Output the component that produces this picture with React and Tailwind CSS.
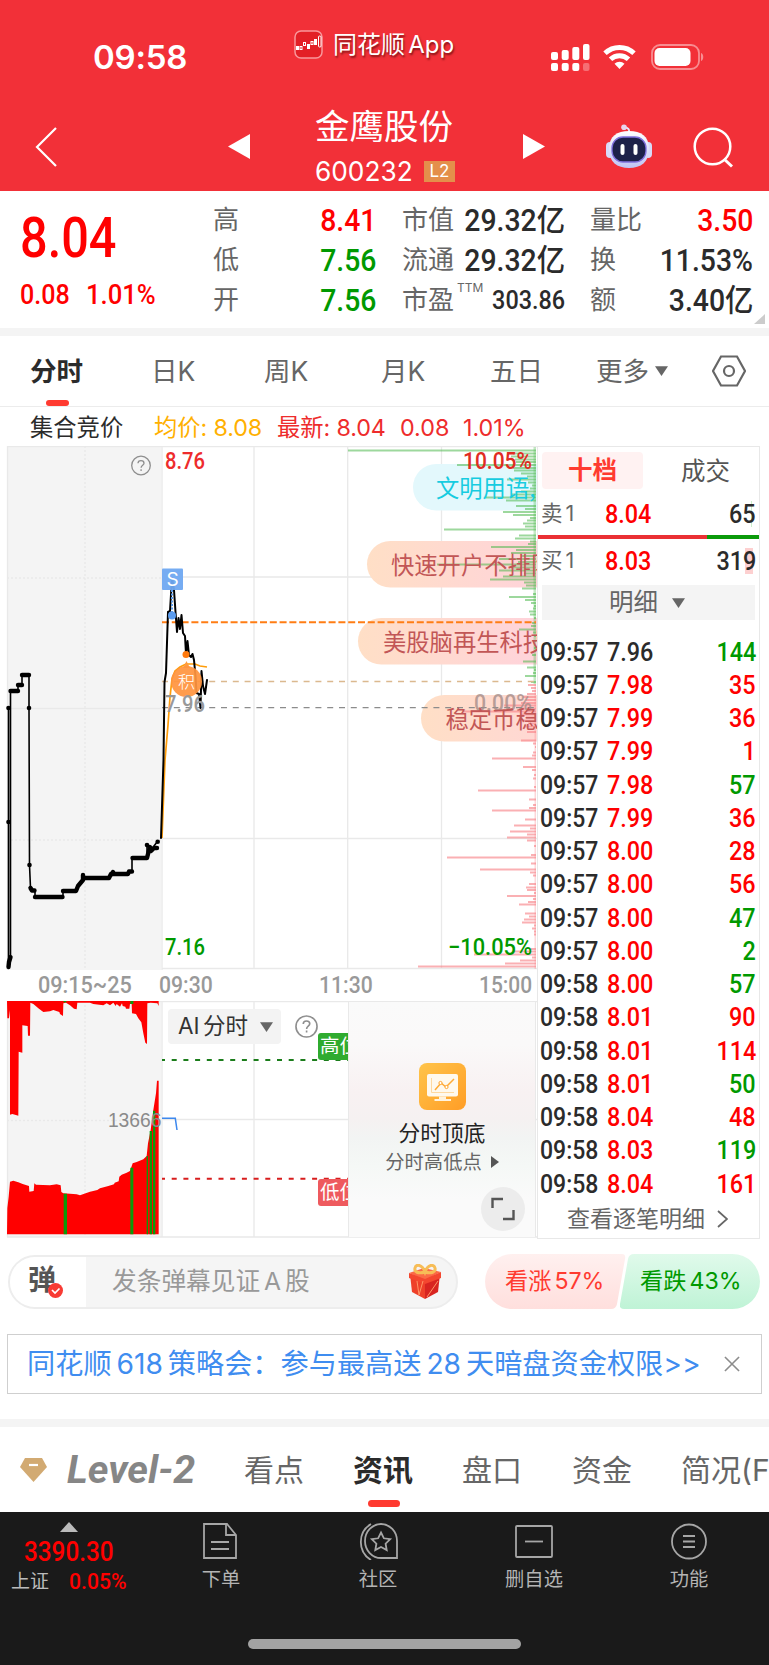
// App.jsx — intraday stock quote screen
import React from 'react';
import { clsx } from 'clsx';

// ─── Data ────────────────────────────────────────────────────
const TRADES = [
  ['09:57', '7.96', '144', 'k', 'g'], ['09:57', '7.98', '35', 'r', 'r'], ['09:57', '7.99', '36', 'r', 'r'],
  ['09:57', '7.99', '1', 'r', 'r'], ['09:57', '7.98', '57', 'r', 'g'], ['09:57', '7.99', '36', 'r', 'r'],
  ['09:57', '8.00', '28', 'r', 'r'], ['09:57', '8.00', '56', 'r', 'r'], ['09:57', '8.00', '47', 'r', 'g'],
  ['09:57', '8.00', '2', 'r', 'g'], ['09:58', '8.00', '57', 'r', 'g'], ['09:58', '8.01', '90', 'r', 'r'],
  ['09:58', '8.01', '114', 'r', 'r'], ['09:58', '8.01', '50', 'r', 'g'], ['09:58', '8.04', '48', 'r', 'r'],
  ['09:58', '8.03', '119', 'r', 'g'], ['09:58', '8.04', '161', 'r', 'r'],
];

const TONE = { k: 'text-[#2b2b2b]', r: 'text-[#ff0000]', g: 'text-[#009900]' };

// price distribution, [y, length]
const GREEN_BARS = [
  [450.5, 188], [453.5, 23], [456.5, 25], [459.5, 21], [462, 20], [465, 79], [468, 23], [470.5, 22], [473.5, 15],
  [476.5, 9], [479.5, 29], [482.5, 8], [485.5, 4], [488.5, 6], [491.5, 15], [494.5, 24], [497.5, 50], [500.5, 30],
  [506, 20], [509, 11], [512, 33], [515, 23], [518, 6], [520.5, 9], [523.5, 13], [526.5, 11], [529.5, 92],
  [535.5, 17], [538.5, 21], [541.5, 6], [544, 8], [547, 45], [550, 20], [553, 25], [556, 15], [559, 37], [562, 18],
  [564.5, 99], [567.5, 25], [570.5, 37], [573.5, 12], [576.5, 33], [579.5, 46], [582.5, 12], [585.5, 10],
  [588.5, 14], [594, 3], [597, 27], [600, 11], [603, 5], [606, 2], [608.5, 3], [611.5, 7], [614.5, 6], [618, 2],
  [623, 4], [626, 5], [629.5, 17], [632.5, 3], [636, 2], [641, 3], [648, 2], [655, 4], [661.5, 13], [667.5, 9],
  [670, 2], [673, 3], [676, 11], [682, 5],
];
const RED_BARS = [
  [685, 8], [688, 5], [691, 4], [694, 9], [697, 13], [700, 10], [703, 15], [705.5, 32], [708.5, 17], [711.5, 73],
  [714.5, 16], [717.5, 10], [720.5, 14], [723.5, 8], [726.5, 12], [732, 9], [740.5, 15], [743.5, 3], [747, 1],
  [752.5, 3], [755.5, 4], [758.5, 44], [767, 13], [770, 4], [775, 2], [778.5, 3], [787, 2], [790.5, 58],
  [799.5, 7], [805, 3], [808, 7], [810.5, 44], [819.5, 11], [825.5, 22], [828.5, 6], [831.5, 26], [834.5, 9],
  [837.5, 29], [840.5, 9], [846, 2], [855, 5], [857.5, 89], [863.5, 5], [869.5, 56], [872.5, 6], [875.5, 3],
  [884, 7], [887.5, 10], [890, 9], [893, 2], [896, 29], [899, 3], [902, 8], [904.5, 17], [913.5, 11], [916.5, 7],
  [919.5, 12], [922.5, 14], [925.5, 2], [928.5, 4], [931.5, 2], [934.5, 2], [949, 5], [951.5, 22], [954.5, 62],
  [957.5, 4], [960.5, 16], [963.5, 31], [966.5, 118],
];

// ─── Small pieces ────────────────────────────────────────────
const Num = ({ children, className, right }) => (
  <span className={clsx(
    "inline-block whitespace-nowrap font-['Roboto','Noto_Sans_CJK_SC',sans-serif] font-medium",
    right ? 'origin-right' : 'origin-left', className?.includes('scale-x-') || 'scale-x-90', className,
  )}>
    {children}
  </span>
);

const Caret = ({ className }) => (
  <svg className={className} width="13" height="12" viewBox="0 0 14 12">
    <path d="M0 1h14L7 11.5z" fill="currentColor" />
  </svg>
);

const Help = ({ size }) => (
  <svg width={size} height={size} viewBox="0 0 24 24" fill="none" stroke="#8e8e8e" strokeWidth="1.7">
    <circle cx="12" cy="12" r="11" />
    <path d="M8.6 9.4c0-2 1.5-3.2 3.4-3.2s3.4 1.2 3.4 3c0 2.4-3.3 2.7-3.3 5.3M12.1 16.3v2" />
  </svg>
);

// ─── Header ──────────────────────────────────────────────────
const Header = () => (
  <header className="h-[191px] bg-[#f23038] text-white">
    <div className="flex h-[102px] items-start">
      <span className="ml-[93px] mt-[41px] w-[201px] text-[33px] leading-[33px] font-semibold tracking-[-0.2px]">09:58</span>
      <svg className="mt-[30px]" width="29" height="29" viewBox="0 0 29 29">
        <rect x="1" y="1" width="27" height="27" rx="6" fill="#e31f26" stroke="#f9979b" strokeWidth="1.5" />
        <g fill="#fff">
          <rect x="2" y="16" width="3" height="4" /><rect x="13" y="14" width="3" height="5" /><rect x="20" y="9" width="3" height="6" />
        </g>
        <g fill="none" stroke="#fff">
          <rect x="6" y="16.5" width="2" height="3" /><rect x="9.5" y="12.5" width="2" height="3" />
          <rect x="17" y="11.5" width="2" height="3" /><rect x="24.5" y="6" width="2.5" height="11" rx="1" />
        </g>
      </svg>
      <span className="ml-[10px] mt-[32px] w-[218px] whitespace-nowrap text-[24px] leading-[26px] [word-spacing:-3.5px] [text-shadow:1px_2px_2px_rgba(60,0,0,.6)]">同花顺 App</span>
      <svg className="mt-[43px]" width="39" height="28" viewBox="0 0 39 28" fill="#fff">
        <rect x="0" y="9" width="7" height="8" rx="2" /><rect x="10.7" y="7" width="7" height="10" rx="2" />
        <rect x="21.3" y="4" width="7" height="13" rx="2" /><rect x="32" y="1" width="6.5" height="16" rx="2" />
        <rect x="0" y="20" width="7" height="8" rx="2" /><rect x="10.7" y="20" width="7" height="8" rx="2" />
        <rect x="21.3" y="20" width="7" height="8" rx="2" /><rect x="32" y="20" width="6.5" height="8" rx="2" opacity=".3" />
      </svg>
      <svg className="ml-[13px] mt-[44px]" width="33" height="26" viewBox="0 0 33 26" fill="none" stroke="#fff" strokeWidth="4.9">
        <path d="M2 9.3a21 21 0 0 1 29 0" /><path d="M7.5 15.3a13 13 0 0 1 18 0" />
        <path d="M16.5 25l-5-5.3a7.3 7.3 0 0 1 10 0z" fill="#fff" stroke="none" />
      </svg>
      <svg className="ml-[15px] mt-[44px]" width="53" height="26" viewBox="0 0 53 26">
        <rect x="1" y="1" width="47" height="24" rx="8" fill="none" stroke="#fff" strokeOpacity=".45" strokeWidth="1.8" />
        <rect x="3.5" y="4" width="36" height="18" rx="5" fill="#fff" />
        <path d="M50 9c3 1 3 7 0 8z" fill="#fff" opacity=".45" />
      </svg>
    </div>
    <div className="flex h-[89px] items-start">
      <svg className="ml-[35px] mt-[25px]" width="23" height="40" viewBox="0 0 23 40" fill="none" stroke="#fff" strokeWidth="2.2">
        <path d="M21 1L2 20l19 19" />
      </svg>
      <svg className="ml-[170px] mt-[32px]" width="22" height="26" viewBox="0 0 22 26"><path d="M22 0v25L0 12.500z" fill="#fff" /></svg>
      <div className="ml-[65px] mt-[7px] w-[208px]">
        <div className="text-[34.5px] leading-[36px]">金鹰股份</div>
        <div className="mt-[11px] flex items-center">
          <span className="w-[109px] text-[27.5px] leading-[31px]"><span className="inline-block origin-left scale-x-[.955]">600232</span></span>
          <span className="flex h-[21px] w-[31px] items-center justify-center bg-[#e48f4b] text-[17px] leading-none">L2</span>
        </div>
      </div>
      <svg className="mt-[32px]" width="22" height="26" viewBox="0 0 22 26"><path d="M0 0v25l22-12.500z" fill="#fff" /></svg>
      <svg className="ml-[60px] mt-[22px]" width="48" height="45" viewBox="0 0 48 45">
        <defs>
          <linearGradient id="helmet" x1="0" y1="0" x2="0" y2="1">
            <stop offset="0" stopColor="#fff" /><stop offset="1" stopColor="#bfc4f4" />
          </linearGradient>
        </defs>
        <path d="M24 9c1-4-1-5-5-6" fill="none" stroke="#e8e8fb" strokeWidth="2" />
        <circle cx="19" cy="3.3" r="2.8" fill="#e8d5ee" />
        <rect x="1" y="18" width="8" height="16" rx="4" fill="#d8daf8" /><rect x="39" y="18" width="8" height="16" rx="4" fill="#d8daf8" />
        <path d="M4 25C4 12 12 7 24 7s20 5 20 18-8 19-20 19S4 38 4 25z" fill="url(#helmet)" />
        <rect x="7" y="13" width="34" height="25" rx="11" fill="#1d2149" stroke="#7f70dd" strokeWidth="1.3" />
        <rect x="15.5" y="20" width="4" height="11" rx="2" fill="#fff" /><rect x="28.5" y="20" width="4" height="11" rx="2" fill="#fff" />
      </svg>
      <svg className="ml-[40px] mt-[25px]" width="42" height="42" viewBox="0 0 42 42" fill="none" stroke="#fff" strokeWidth="2.5">
        <circle cx="19.5" cy="19.5" r="17.8" /><path d="M31 32l8 7.5" strokeWidth="3" />
      </svg>
    </div>
  </header>
);

// ─── Quote summary ───────────────────────────────────────────
const Stat = ({ label, value, tone = 'k', sup }) => (
  <div className="flex h-[40px] items-center justify-between">
    <span className="flex items-start whitespace-nowrap text-[26px] leading-[28px] text-[#666]">
      {label}{sup && <sup className="top-0 ml-[3px] -mt-[4px] text-[12px] leading-[12px]">{sup}</sup>}
    </span>
    <Num right className={clsx(TONE[tone], 'leading-none', sup ? 'text-[26px] -ml-5 scale-x-90' : 'text-[31px] scale-x-[.915]')}>{value}</Num>
  </div>
);

const Quote = () => (
  <section className="relative flex h-[145px] border-b-8 border-[#f4f4f4] pt-[9px]">
    <div className="w-[213px] pl-[20px] text-[#ff0000]">
      <div className="mt-[9px] h-[56px] text-[55px] leading-[56px]"><Num className="scale-x-[.885]">8.04</Num></div>
      <div className="mt-[15px] flex text-[28.5px] leading-[30px]">
        <Num className="w-[66px] scale-x-[.88]">0.08</Num><Num className="scale-x-[.9]">1.01%</Num>
      </div>
    </div>
    <div className="w-[163px]">
      <Stat label="高" value="8.41" tone="r" /><Stat label="低" value="7.56" tone="g" /><Stat label="开" value="7.56" tone="g" />
    </div>
    <div className="ml-[26px] w-[163px]">
      <Stat label="市值" value="29.32亿" /><Stat label="流通" value="29.32亿" /><Stat label="市盈" value="303.86" sup="TTM" />
    </div>
    <div className="ml-[25px] w-[163px]">
      <Stat label="量比" value="3.50" tone="r" /><Stat label="换" value="11.53%" /><Stat label="额" value="3.40亿" />
    </div>
    <svg className="absolute bottom-[4px] right-[4px]" width="11" height="10"><path d="M11 0v10H0z" fill="#ccc" /></svg>
  </section>
);

// ─── Period tabs ─────────────────────────────────────────────
const PeriodTabs = () => (
  <nav className="flex h-[71px] items-center border-b border-[#ececec] text-[26.5px] leading-none text-[#666]">
    <div className="relative ml-[30px] w-[121px] font-bold text-[#2b2b2b]">
      分时
      <span className="absolute left-[16px] top-[42px] h-[6px] w-[23px] rounded-[3px] bg-[#ff3a30]" />
    </div>
    <span className="w-[113px]">日K</span>
    <span className="w-[117px]">周K</span>
    <span className="w-[109px]">月K</span>
    <span className="w-[106px]">五日</span>
    <span className="flex w-[116px] items-center">更多<Caret className="ml-[6px] -mt-px" /></span>
    <svg width="34" height="32" viewBox="0 0 34 32" fill="none" stroke="#666" strokeWidth="2.2">
      <path d="M9 1.500h16L33 16l-8 14.500H9L1 16z" /><circle cx="17" cy="16" r="5" />
    </svg>
  </nav>
);

const InfoRow = () => (
  <div className="flex h-[39px] items-center pt-[3px] text-[23.3px] leading-none text-[#ee2c2c] whitespace-nowrap">
    <span className="ml-[30px] w-[124px] text-[#2b2b2b]">集合竞价</span>
    <span className="w-[123px] text-[#ffb000] tracking-[-0.1px]">均价: 8.08</span>
    <span className="w-[123px] tracking-[-0.1px]">最新: 8.04</span>
    <span className="w-[63px]">0.08</span>
    <span>1.01%</span>
  </div>
);

// ─── Price chart ─────────────────────────────────────────────
const AUCTION_THIN = 'M8.5 967V708M10.5 957V691H18V685H22V675H29V708L29.5 865 30.5 888 35 891V897H63V891H76L79 885 83 879V878H109L110 874H128L130 871H132V858H147V845L151 850 157 842';
const AUCTION_THICK = ['M10.5 691H18', 'M18 685H22', 'M22 675H29', 'M30.5 888L32 890.5H34.5', 'M35 897H62.5', 'M63 891H76L78 886 83 880V875', 'M84 878H109L111 874H128L129 871.5H132', 'M112 874L113 872', 'M132.5 858H147L148 854 150 847 151 851 154 848H157', 'M8.5 967L9 962 10.5 957'];
const PRICE = 'M161 838L163.5 760 164.5 682 166 673 168 612 170 611 172 578 174 590 175.5 612 177 632 178.5 618 180 629 181.500 615 183 633 185 636 186 654 187.5 641 189 655 191 657 192.5 654 194 660 195.5 676 196.5 693 199 694 200.5 708 201.5 671 203 686 205 694 207 680';
const AVG = 'M162 838L165 760 168 725 170 697 172 679 175 671 180 667 186 664H195L200 666 207 667';

const BULLETS = [
  { x: 413, y: 464, tx: 436, text: '文明用语,', fill: '#e3f8fc', color: '#17cce0' },
  { x: 367, y: 541, tx: 391, text: '快速开户不排队', fill: 'url(#peach)', color: '#c25656' },
  { x: 358, y: 618, tx: 383, text: '美股脑再生科技', fill: 'url(#peach)', color: '#c25656' },
  { x: 421, y: 695, tx: 445.5, text: '稳定币稳', fill: 'url(#peach)', color: '#c25656' },
];

const PriceChart = () => (
  <svg width="537" height="524" viewBox="0 446 537 524">
    <defs>
      <linearGradient id="peach" x1="0" x2="1">
        <stop offset="0" stopColor="#ffdfc6" /><stop offset=".9" stopColor="#ffd3db" />
      </linearGradient>
    </defs>
    <rect x="7" y="446" width="154" height="524" fill="#f4f4f4" />
    <g stroke="#e9e9e9" strokeWidth="1.3" fill="none">
      <path d="M7 446.500H537M7.500 446V970M162 446V970M254 446V969M347.700 446V969M441.500 446V969M162 577H537M162 838.500H537M162 968.500H537M7 708.500H161" />
      <path d="M85 446V970M7 578H161M7 840H161" strokeDasharray="2 2" />
    </g>
    {BULLETS.map(b => <rect key={b.y} x={b.x} y={b.y} width="200" height="46.5" rx="23.25" fill={b.fill} />)}
    <g fill="#4db84d" fillOpacity=".55">
      {GREEN_BARS.map(([y, w]) => <rect key={y} x={536 - w} y={y - 1} width={w} height="2" />)}
      <rect x="533.5" y="447" width="2.5" height="237" opacity=".6" />
    </g>
    <g fill="#f8858b" fillOpacity=".65">
      {RED_BARS.map(([y, w]) => <rect key={y} x={536 - w} y={y - 1} width={w} height="2" />)}
      <rect x="534.5" y="684" width="1.5" height="285" opacity=".5" />
    </g>
    <path d="M162 622.200H536" stroke="#ff7d14" strokeWidth="2" strokeDasharray="7 2.800" />
    <path d="M162 681.500H536" stroke="#dbb98f" strokeWidth="1.3" strokeDasharray="6 5.800" />
    <path d="M162 707.700H536" stroke="#8c8c8c" strokeWidth="1.3" strokeDasharray="6 5.800" />

    <path d={AVG} fill="none" stroke="#ff9d0a" strokeWidth="1.7" />
    <g fill="none" stroke="#000" strokeLinejoin="round" strokeLinecap="round">
      <path d={AUCTION_THIN} strokeWidth="1.6" />
      {AUCTION_THICK.map(d => <path key={d} d={d} strokeWidth="4.4" />)}
      <path d={PRICE} strokeWidth="2" />
    </g>
    {[[8.5, 708], [29, 708], [8.5, 822], [29.5, 865], [157.7, 841.7], [147, 845]].map(([x, y]) => (
      <circle key={`${x}-${y}`} cx={x} cy={y} r="2.3" />
    ))}

    <circle cx="186" cy="654.5" r="3.5" fill="#ff7a0e" />
    <path d="M183 668l3.500-7 3.500 7z" fill="#ff9a40" />
    <circle cx="186.5" cy="681.5" r="15.5" fill="#ff9440" fillOpacity=".93" />
    <text x="178" y="688" fill="#fff" className="font-['Noto_Sans_CJK_SC'] text-[17px] font-light">积</text>
    <path d="M172 590V612" stroke="#5a9ae8" strokeWidth="2" strokeDasharray="2 1.500" />
    <circle cx="172" cy="615.5" r="4" fill="#5a9bee" />
    <rect x="162" y="568.5" width="21" height="21.5" rx="1" fill="#6fa8f1" fillOpacity=".95" />
    <text x="172.5" y="586" textAnchor="middle" fill="#fff" className="font-['Inter'] text-[19px]">S</text>

    {/* axis labels */}
    <g className="font-['Roboto'] font-medium text-[23.5px]">
      <text x="165" y="469" fill="#ee2c2c" textLength="40" lengthAdjust="spacingAndGlyphs">8.76</text>
      <text x="165" y="955" fill="#009900" textLength="40" lengthAdjust="spacingAndGlyphs">7.16</text>
      <text x="165" y="711.5" fill="#999" textLength="40" lengthAdjust="spacingAndGlyphs">7.96</text>
      <text x="463" y="469" fill="#e02c22" textLength="69" lengthAdjust="spacingAndGlyphs">10.05%</text>
      <text x="448" y="955" fill="#009900" textLength="84" lengthAdjust="spacingAndGlyphs">−10.05%</text>
      <text x="474" y="711" fill="#a58c88" fillOpacity=".8" textLength="58" lengthAdjust="spacingAndGlyphs">0.00%</text>
    </g>
    <g className="font-['Noto_Sans_CJK_SC'] text-[23.3px]">
      {BULLETS.map(b => <text key={b.y} x={b.tx} y={b.y + 32.5} fill={b.color}>{b.text}</text>)}
    </g>
    <g transform="translate(131 455.500)" fill="none" stroke="#8e8e8e" strokeWidth="1.3">
      <circle cx="10" cy="10" r="9.3" />
      <path d="M7 7.800c0-1.700 1.300-2.700 3-2.700s3 1 3 2.600c0 2-2.900 2.200-2.900 4.500M10.100 13.800v1.600" />
    </g>
  </svg>
);

const TimeAxis = () => (
  <div className="flex h-[31px] items-center text-[23px] leading-none text-[#999]">
    <Num className="ml-[38px] w-[122px] scale-x-[.94]">09:15~25</Num>
    <Num className="w-[162px] scale-x-[.92]">09:30</Num>
    <Num className="w-[162px] scale-x-[.92]">11:30</Num>
    <Num className="scale-x-[.91]">15:00</Num>
  </div>
);

// ─── Volume / AI sub chart ───────────────────────────────────
const HANG = '21,32 476,32 476,48 472,40 452,38 442,40 441,162 436,158 430,130 424,97 415,85 408,72 396,70 395,42 390,42 388,56 378,56 376,50 368,48 366,40 360,50 350,42 347,48 340,38 330,46 320,40 310,46 280,42 270,38 232,38 230,58 222,56 210,46 198,38 190,40 189,78 180,72 178,66 160,60 150,64 130,66 115,55 100,42 91,38 90,137 84,137 83,108 67,106 67,188 56,185 55,377 45,374 37,372 30,374 30,60 27,85 22,85';
const RISE = '21,733 22,655 26,620 30,575 40,572 55,577 68,582 87,588 88,605 101,603 103,580 108,584 150,586 170,583 182,586 184,606 190,610 230,613 240,616 270,605 292,600 300,595 325,588 342,583 344,578 356,574 358,560 365,554 380,548 390,543 398,520 410,516 430,508 440,498 444,460 452,420 460,360 468,310 471,272 476,272 476,733';

const SubChart = () => (
  <div className="relative h-[238px]">
    <svg className="block" width="537" height="238" viewBox="0 1001 537 238">
      <rect x="7" y="1001" width="154" height="236" fill="#f4f4f4" />
      <g stroke="#e9e9e9" strokeWidth="1.3" fill="none">
        <path d="M7 1001.500H537M7.500 1001V1237M162 1001V1237M254 1001V1237M162 1119.500H537M7 1237H537" />
        <path d="M85 1001V1237M7 1120.500H161" strokeDasharray="2 2" />
      </g>
      <g transform="translate(0 990) scale(.33333)">
        <polygon points={HANG} fill="#ff0000" /><polygon points={RISE} fill="#ff0000" />
        <g fill="#0a9a0a">
          <path d="M191 611h10v122h-10zM391 533h9v200h-9zM191 32h8v5h-8zM391 32h9v10h-9z" />
          <path d="M440 498h4v235h-4zM449 423h7v310h-7zM459 362h7v371h-7z" />
        </g>
      </g>
      <text x="161.5" y="1127" textAnchor="end" fill="#8a8a8a" className="font-['Liberation_Sans'] text-[19.3px]">13666</text>
      <path d="M162 1118.300H175.300L177 1130" fill="none" stroke="#3d88ee" strokeWidth="1.5" />
      <path d="M162 1060H349" stroke="#1b7d1b" strokeWidth="2" strokeDasharray="5 6.700" strokeDashoffset="2" />
      <path d="M162 1178.700H349" stroke="#d81d1d" strokeWidth="2" strokeDasharray="5 6.700" strokeDashoffset="2" />
    </svg>
    <div className="absolute left-[168px] top-[8px] flex h-[35px] w-[113px] items-center rounded bg-[#f3f3f3] pl-[10px] text-[22.5px] leading-none text-[#333]">
      <span className="whitespace-nowrap [word-spacing:-3px]">AI 分时</span><Caret className="absolute right-[8px] text-[#666]" />
    </div>
    <div className="absolute left-[295px] top-[14px]"><Help size={23} /></div>
    <div className="absolute left-[318px] top-[32px] h-[27px] w-[31px] overflow-hidden whitespace-nowrap rounded-l-[3px] bg-[#2fab2f] pl-[2px] text-[19.5px] leading-[27px] text-white">高位</div>
    <div className="absolute left-[318px] top-[178px] h-[27px] w-[31px] overflow-hidden whitespace-nowrap rounded-l-[3px] bg-[#ee5a5e] pl-[2px] text-[19.5px] leading-[27px] text-white">低位</div>
    <div className="absolute left-[348px] top-px flex h-[235px] w-[188px] flex-col items-center border-x border-[#e9e9e9] bg-[linear-gradient(180deg,#fafafa_0%,#faf9f9_18%,#f8f1f2_38%,#f5f1f1_50%,#f2f4f3_58%,#f5f8f6_70%,#fafafa_84%)] pt-[61px]">
      <svg width="47" height="47" viewBox="0 0 47 47">
        <defs>
          <linearGradient id="gold" x1="0" y1="0" x2="1" y2="1">
            <stop offset="0" stopColor="#ffc44a" /><stop offset="1" stopColor="#ff9d26" />
          </linearGradient>
        </defs>
        <rect width="47" height="47" rx="8" fill="url(#gold)" />
        <rect x="8" y="11" width="31" height="22.5" rx="2" fill="#fff9ee" />
        <path d="M20 33.500h7v2.500h5v2H15.500v-2H20z" fill="#fff3df" />
        <path d="M12.500 15v14.500H35" fill="none" stroke="#ffd9a0" strokeWidth="1" />
        <path d="M16 27l6-7 5 4 8-8" fill="none" stroke="#ffab36" strokeWidth="1.5" />
        <circle cx="21.5" cy="20" r="1.6" fill="#fff" stroke="#ffa52e" /><circle cx="27.5" cy="24" r="1.6" fill="#fff" stroke="#ffa52e" />
      </svg>
      <div className="mt-[11px] text-[21.7px] leading-[24px] text-[#222]">分时顶底</div>
      <div className="mt-[7px] flex items-center text-[19.3px] leading-[20px] text-[#666]">
        分时高低点
        <svg className="ml-[9px]" width="8" height="12"><path d="M0 0v12l8-6z" fill="#555" /></svg>
      </div>
      <div className="absolute bottom-[6px] right-[10px] flex size-[44px] items-center justify-center rounded-full bg-[#ececec]">
        <svg width="24" height="24" viewBox="0 0 24 24" fill="none" stroke="#555" strokeWidth="2.4">
          <path d="M1.500 11V2H12M22.500 13v9H12" />
        </svg>
      </div>
    </div>
  </div>
);

// ─── Order book ──────────────────────────────────────────────
const BookRow = ({ label, price, qty, mark, className }) => (
  <div className={clsx('flex h-[46px] items-center leading-none', className)}>
    <span className="w-[67px] pl-[3px] text-[21.5px] text-[#666] [word-spacing:-3px]">{label} 1</span>
    <Num className="w-[60px] text-[26px] text-[#ff0000]">{price}</Num>
    <span className={clsx('ml-auto mr-[3px] text-[26px] text-[#2b2b2b]', mark)}><Num right>{qty}</Num></span>
  </div>
);

const OrderBook = () => (
  <aside className="flex h-[793px] w-[223px] flex-col border border-[#e8e8e8]">
    <div className="mt-[5px] flex h-[37px] items-center text-[24.5px] leading-none">
      <span className="ml-[4px] flex h-[37px] w-[101px] items-center justify-center rounded bg-[#fff2f2] font-bold text-[#ff3b30]">十档</span>
      <span className="ml-[38px] mt-px text-[#555]">成交</span>
    </div>
    <BookRow className="pt-[3px]" label="卖" price="8.04" qty="65" mark="bg-[linear-gradient(#c9efc9,#c9efc9)] bg-[length:1px_100%] bg-[position:right_4px_top] bg-no-repeat" />
    <div className="flex h-[4px]"><span className="flex-1 bg-[#ea3034]" /><span className="w-[52px] bg-[#0a9a0a]" /></div>
    <BookRow className="pb-[2px]" label="买" price="8.03" qty="319" mark="bg-[linear-gradient(#fdd0d0,#fdd0d0)] bg-[length:8px_100%] bg-[position:right_3px_top] bg-no-repeat" />
    <div className="mx-[4px] flex h-[35px] items-center bg-[#f4f4f4] pl-[67px] text-[24.5px] leading-none text-[#666]">
      明细<Caret className="ml-[14px]" />
    </div>
    <div className="mt-[15px]">
      {TRADES.map(([time, price, qty, pc, qc], i) => (
        <div key={i} className="flex h-[33.25px] items-center text-[26px] leading-none">
          <Num className="ml-[2px] w-[67px] text-[#2b2b2b] scale-x-[.885]">{time}</Num>
          <Num className={TONE[pc]}>{price}</Num>
          <Num right className={clsx('ml-auto mr-[3px]', TONE[qc])}>{qty}</Num>
        </div>
      ))}
    </div>
    <div className="mt-[6px] flex items-center whitespace-nowrap pl-[29px] text-[23px] leading-[26px] text-[#666]">
      查看逐笔明细
      <svg className="ml-[12px]" width="11" height="18" viewBox="0 0 11 18" fill="none" stroke="#666" strokeWidth="1.7"><path d="M1 1l9 8-9 8" /></svg>
    </div>
  </aside>
);

// ─── Bullet comment bar ──────────────────────────────────────
const CommentBar = () => (
  <div className="mt-[15px] flex h-[55px] items-center">
    <div className="ml-[8px] flex h-[54px] w-[450px] items-center overflow-hidden rounded-full border-2 border-[#ededed] bg-[#f5f5f5]">
      <div className="relative flex h-full w-[76px] items-center bg-white pb-[3px] pl-[18px] text-[28px] leading-none font-bold text-[#555]">
        弹
        <svg className="absolute left-[38px] top-[26px]" width="15" height="15" viewBox="0 0 15 15">
          <circle cx="7.5" cy="7.5" r="7.5" fill="#f83b34" /><path d="M4 7l3 3 4.500-4.500" fill="none" stroke="#fff" strokeWidth="1.7" />
        </svg>
      </div>
      <span className="ml-[26px] w-[296px] whitespace-nowrap text-[24.7px] leading-none text-[#999] [word-spacing:-3px]">发条弹幕见证 A 股</span>
      <svg width="34" height="36" viewBox="0 0 34 36">
        <path d="M2 10l15 4v21L4 28z" fill="#ee4029" /><path d="M32 10l-15 4v21l13-7z" fill="#d82420" />
        <path d="M1 9l15-5 17 4-16 8z" fill="#fb6a46" /><path d="M1 9l16 6v5L1 14zM33 8l-16 7v5l16-6z" fill="#f4472f" />
        <path d="M17 8C10 10 6 8 7 4s7-4 10 4c3-8 9-8 10-4s-4 6-10 4z" fill="none" stroke="#f7bd57" strokeWidth="3" />
        <path d="M9 17l2 14 4-14M30 17L19 33" fill="none" stroke="#ff9565" strokeWidth="1" />
      </svg>
    </div>
    <div className="ml-[27px] flex h-[55px] w-[141px] items-center whitespace-nowrap bg-linear-to-b from-[#fff0ef] to-[#ffdfdd] pl-[20px] text-[23.2px] leading-none text-[#ff3b30] [word-spacing:-3.5px] [clip-path:path('M27.5_0H137Q141_0_140_5L132_50Q131_55_126_55H27.5A27.5_27.5_0_0_1_27.5_0Z')]">看涨 57%</div>
    <div className="-ml-[6px] flex h-[55px] w-[140px] items-center whitespace-nowrap bg-linear-to-b from-[#e0faeb] to-[#bff3d6] pl-[20px] text-[23.2px] leading-none text-[#009900] [word-spacing:-3.5px] [clip-path:path('M112.5_0H14Q9_0_8_5L0_50Q-1_55_4_55H112.5A27.5_27.5_0_0_0_112.5_0Z')]">看跌 43%</div>
  </div>
);

const Banner = () => (
  <div className="mx-[7px] mt-[25px] flex h-[60px] items-center border border-[#cfcfcf] pl-[19px] whitespace-nowrap">
    <span className="w-[697px] text-[28.2px] leading-none text-[#3f8df0] [word-spacing:-3px]">同花顺 618 策略会：参与最高送 28 天暗盘资金权限&gt;&gt;</span>
    <svg width="16" height="16" viewBox="0 0 17 17" stroke="#8c8c8c" strokeWidth="1.7"><path d="M1 1l15 15M16 1L1 16" /></svg>
  </div>
);

// ─── Section tabs ────────────────────────────────────────────
const SectionTabs = () => (
  <nav className="mt-[25px] flex h-[93px] items-center overflow-hidden border-t-8 border-[#f4f4f4] text-[30px] leading-none whitespace-nowrap text-[#666]">
    <svg className="ml-[20px] shrink-0" width="27" height="24" viewBox="0 0 27 24">
      <path d="M5 0h17l5 9-13.500 15L0 9z" fill="#d2aa72" /><path d="M9 7h9" stroke="#fff" strokeWidth="2.2" />
    </svg>
    <span className="ml-[20px] w-[177px] shrink-0 font-['Roboto'] text-[38px] font-bold italic text-[#868686]"><span className="inline-block origin-left scale-x-[1.04]">Level-2</span></span>
    <span className="w-[109px] shrink-0">看点</span>
    <span className="relative w-[109px] shrink-0 font-bold text-[#2b2b2b]">
      资讯
      <span className="absolute left-[15px] top-[45px] h-[7px] w-[32px] rounded-[4px] bg-[#ff3a30]" />
    </span>
    <span className="w-[110px] shrink-0">盘口</span>
    <span className="w-[109px] shrink-0">资金</span>
    <span className="shrink-0">简况(F10)</span>
  </nav>
);

// ─── Bottom bar ──────────────────────────────────────────────
const NavItem = ({ label, className, children }) => (
  <div className={clsx('flex flex-col items-center text-[19.3px] leading-[22px] text-[#b4b4b4]', className)}>
    <svg width="42" height="38" viewBox="0 0 42 38" fill="none" stroke="#a6a6a6" strokeWidth="1.8">{children}</svg>
    <span className="mt-[8px]">{label}</span>
  </div>
);

const BottomBar = () => (
  <footer className="h-[153px] bg-[#1a1a1a] pt-[10px]">
    <div className="flex h-[117px]">
      <div className="w-[137px]">
        <svg className="ml-[60px] block" width="18" height="10"><path d="M9 0l9 10H0z" fill="#bbb" /></svg>
        <div className="mt-[5px] pl-[24px] text-[27px] leading-[30px] text-[#ff0000]"><Num className="scale-x-[.9]">3390.30</Num></div>
        <div className="mt-[4px] flex items-center pl-[11px] text-[19px] leading-[22px] text-[#bbb]">
          <span className="w-[58px]">上证</span><Num className="text-[22.8px] text-[#ff0000] scale-x-[.93]">0.05%</Num>
        </div>
      </div>
      <NavItem label="下单" className="ml-[54px] w-[60px]">
        <path d="M4 2h23l9 11v23H4zM26 2v11h10M11 20h18M11 27h18" />
      </NavItem>
      <NavItem label="社区" className="ml-[97px] w-[60px]">
        <path d="M40 36H24A16 17 0 1 1 40 19zM14 2A21 21 0 0 0 14 38" />
        <path d="M24 10.500l2.900 5.800 6.300.9-4.600 4.500 1.100 6.300-5.700-3-5.700 3 1.100-6.300-4.600-4.500 6.300-.9z" />
      </NavItem>
      <NavItem label="删自选" className="ml-[96px] w-[60px]">
        <rect x="3" y="4" width="36" height="31" rx="1" /><path d="M12 19.500h18" />
      </NavItem>
      <NavItem label="功能" className="ml-[95px] w-[60px]">
        <circle cx="21" cy="19.5" r="17" /><path d="M15 14h12M15 19.500h12M15 25h12" />
      </NavItem>
    </div>
    <div className="mx-auto h-[10px] w-[273px] rounded-full bg-[#a3a3a3]" />
  </footer>
);

export default function App() {
  return (
    <div className="h-[1665px] w-[769px] overflow-hidden bg-white font-['Inter','Noto_Sans_CJK_SC',sans-serif]">
      <Header />
      <Quote />
      <PeriodTabs />
      <InfoRow />
      <main className="flex h-[793px]">
        <div className="w-[537px] [&>svg]:block">
          <PriceChart />
          <TimeAxis />
          <SubChart />
        </div>
        <OrderBook />
      </main>
      <CommentBar />
      <Banner />
      <SectionTabs />
      <BottomBar />
    </div>
  );
}
